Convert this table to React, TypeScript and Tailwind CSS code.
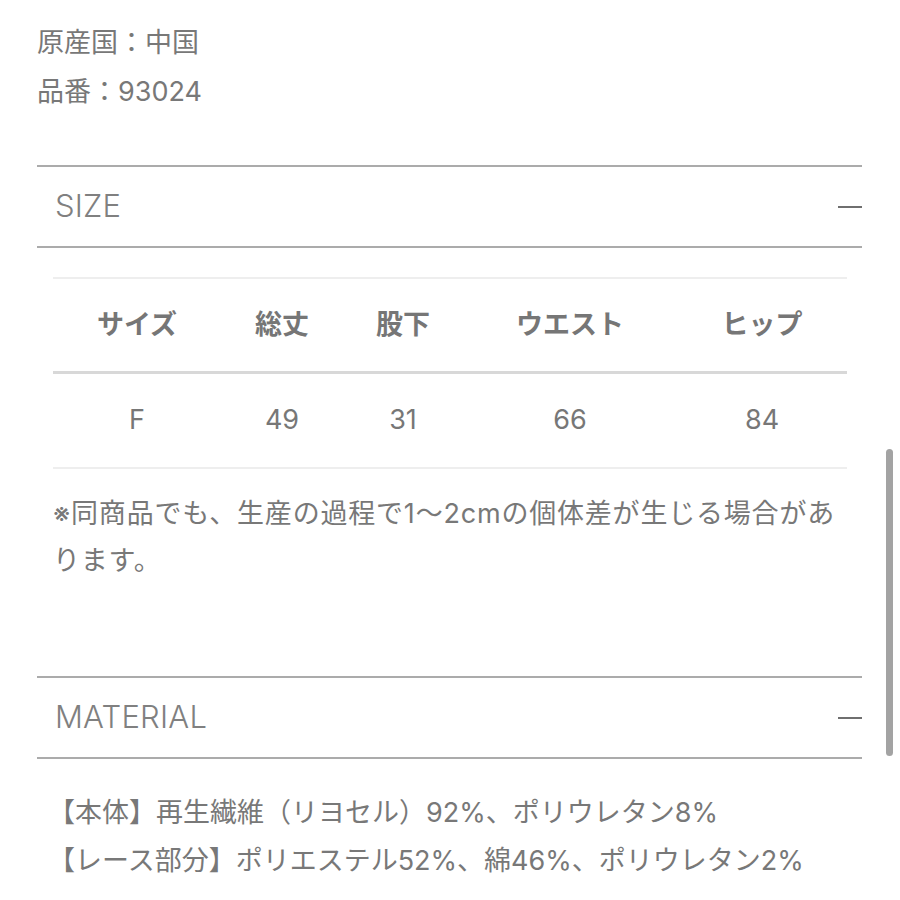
const font = "font-['Inter','Noto_Sans_CJK_JP',sans-serif]";

const headers = ["サイズ", "総丈", "股下", "ウエスト", "ヒップ"];
const values = ["F", "49", "31", "66", "84"];

function SectionHeader({ title }: { title: string }) {
  return (
    <div className="flex h-[83px] items-center justify-between border-y-2 border-[#ababab] pl-[18px]">
      <span className="text-[31px] font-light tracking-[0.2px] text-[#808080]">{title}</span>
      <span className="h-[2px] w-[24px] bg-[#6f6f6f]" />
    </div>
  );
}

export default function App() {
  return (
    <div className={`relative min-h-[900px] w-[900px] overflow-hidden bg-white ${font} text-[#787878]`}>
      <div className="pl-[37px] pr-[38px] pt-[18px]">
        <div className="text-[27px] leading-[49px]">
          <p>原産国：中国</p>
          <p>品番：93024</p>
        </div>

        <div className="mt-[49px]">
          <SectionHeader title="SIZE" />
        </div>

        <div className="mt-[29px] pl-[16px] pr-[15px]">
          <div className="border-t-2 border-[#eeeeee]">
            <div className="grid h-[95px] grid-cols-[168px_122px_120px_214px_170px] items-center border-b-[3px] border-[#d8d8d8]">
              {headers.map((h) => (
                <div key={h} className="text-center text-[27px] font-bold text-[#767676]">
                  {h}
                </div>
              ))}
            </div>
            <div className="grid h-[95px] grid-cols-[168px_122px_120px_214px_170px] items-center border-b-2 border-[#eeeeee]">
              {values.map((v) => (
                <div key={v} className="text-center text-[27px] text-[#777]">
                  {v}
                </div>
              ))}
            </div>
          </div>
          <p className="mt-[21px] text-[27px] leading-[47px] tracking-[0.8px]">
            ※同商品でも、生産の過程で1〜2cmの個体差が生じる場合があります。
          </p>
        </div>

        <div className="mt-[92px]">
          <SectionHeader title="MATERIAL" />
        </div>

        <div className="mt-[30px] pl-[11px] text-[27px] leading-[48px]">
          <p>【本体】再生繊維（リヨセル）92%、ポリウレタン8%</p>
          <p>【レース部分】ポリエステル52%、綿46%、ポリウレタン2%</p>
        </div>
      </div>

      <div className="absolute left-[886px] top-[449px] h-[307px] w-[7px] rounded-full bg-[#a3a3a3]" />
    </div>
  );
}
